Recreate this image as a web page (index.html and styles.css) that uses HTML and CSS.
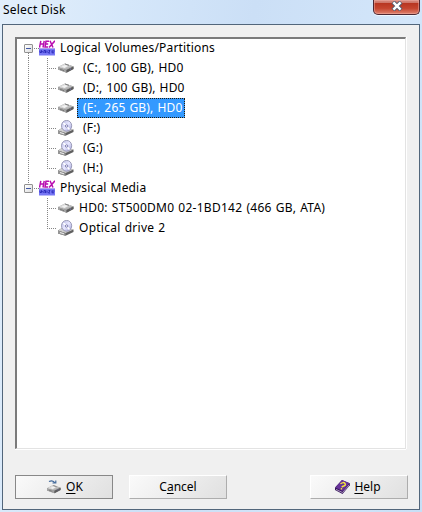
FILE: index.html
```html
<!DOCTYPE html>
<html lang="en">
<head>
<meta charset="utf-8">
<title>Select Disk</title>
<link rel="stylesheet" href="styles.css">
</head>
<body>
<svg class="defs" width="0" height="0" aria-hidden="true">
  <defs>
    <linearGradient id="metal" x1="0" y1="0" x2="1" y2="1"><stop offset="0" stop-color="#f4f4f4"/><stop offset=".55" stop-color="#c5c5c5"/><stop offset="1" stop-color="#868686"/></linearGradient>
    <linearGradient id="disc" x1="0" y1="0" x2="1" y2="1"><stop offset="0" stop-color="#b4b6e2"/><stop offset=".5" stop-color="#e8e8ff"/><stop offset="1" stop-color="#9a9ad4"/></linearGradient>
    <symbol id="drive" viewBox="0 0 18 16">
      <path d="M1 7 8 3.5 16.5 6.5V9L9.5 12.8 1 9.6Z" fill="#848484"/>
      <path d="M1 7 8 3.5 16.5 6.5 9.5 10Z" fill="url(#metal)"/>
      <path d="M1 7 9.5 10V12.8L1 9.6Z" fill="#a4a4a4"/>
      <path d="M9.5 10 16.5 6.5V9L9.5 12.8Z" fill="#5c5c5c"/>
      <path d="M4.5 6.8 8 5 11 6 7.5 8Z" fill="#f2f2f2"/>
      <path d="M3 9.2 7 10.7M8 4 12 5.4" stroke="#6c6c6c" stroke-width=".8"/>
      <path d="M13 9h1" stroke="#77b" stroke-width="1"/>
    </symbol>
    <symbol id="optical" viewBox="0 0 18 16">
      <path d="M1 10.5 5 8 16.5 9.5V12L8.5 15.7 1 13.5Z" fill="#606060"/>
      <path d="M1 10.5 5 8 16.5 9.5 8.5 13Z" fill="#d0d0d0"/>
      <path d="M1 10.5 8.5 13V15.7L1 13.5Z" fill="#959595"/>
      <path d="M3 12.5 7 13.8" stroke="#eee"/>
      <ellipse cx="9.6" cy="5.8" rx="5.1" ry="5.4" fill="url(#disc)" stroke="#8888a8" stroke-width=".8"/>
      <path d="M6.3 3.2 8.9 5.2M10 6.7 12.5 9.6" stroke="#fff" stroke-width="1.5"/>
      <circle cx="9.6" cy="6" r="1.2" fill="#fff" stroke="#6666a0" stroke-width=".8"/>
    </symbol>
    <symbol id="hex" viewBox="0 0 16 16">
      <path d="M0 9h16v6.5H0z" fill="#7777f5"/>
      <path d="M0 8.5h16" stroke="#b4a5ee"/>
      <path d="M1.8.8.5 7.5M5.2.8 4 7.5M1.5 4h3.2M10 1.3H7L6 7h3M6.5 4h2.7M11 .8 14 7.5M16 .8 10 7.5" fill="none" stroke="#b90eb0" stroke-width="1.5"/>
      <path d="M1 10.5v2h1.5v-2l1.5 2M5 13v-2.5h1.5V13M8 10.5v2.3M9.5 10.5H11L9.5 13H11M13 10.5v2.3h2M13 11h2.5" fill="none" stroke="#2525b4" stroke-width=".9"/>
    </symbol>
  </defs>
</svg>
<div class="window">
  <header class="titlebar">
    <span class="title">Select Disk</span>
    <button class="close" aria-label="Close"><svg width="12" height="10" viewBox="0 0 12 10"><path d="M2 1 10 9M10 1 2 9" stroke="#4d5a70" stroke-width="4.2"/><path d="M2.4 1.4 9.6 8.6M9.6 1.4 2.4 8.6" stroke="#fff" stroke-width="2.4"/></svg></button>
  </header>
  <main class="client">
    <ul class="tree">
      <li class="row"><span class="gutter first"><i class="toggle"></i></span><svg class="hex"><use href="#hex"/></svg><span class="label root volumes">Logical Volumes/Partitions</span></li>
      <li class="row"><span class="gutter trunk"></span><span class="gutter branch"></span><svg class="disk"><use href="#drive"/></svg><span class="label volume">(C:, 100 GB), HD0</span></li>
      <li class="row"><span class="gutter trunk"></span><span class="gutter branch"></span><svg class="disk"><use href="#drive"/></svg><span class="label volume">(D:, 100 GB), HD0</span></li>
      <li class="row"><span class="gutter trunk"></span><span class="gutter branch"></span><svg class="disk"><use href="#drive"/></svg><span class="label volume selected">(E:, 265 GB), HD0</span></li>
      <li class="row"><span class="gutter trunk"></span><span class="gutter branch"></span><svg class="disk"><use href="#optical"/></svg><span class="label volume">(F:)</span></li>
      <li class="row"><span class="gutter trunk"></span><span class="gutter branch"></span><svg class="disk"><use href="#optical"/></svg><span class="label volume">(G:)</span></li>
      <li class="row"><span class="gutter trunk"></span><span class="gutter branch last"></span><svg class="disk"><use href="#optical"/></svg><span class="label volume">(H:)</span></li>
      <li class="row"><span class="gutter end"><i class="toggle"></i></span><svg class="hex"><use href="#hex"/></svg><span class="label root">Physical Media</span></li>
      <li class="row"><span class="gutter"></span><span class="gutter branch"></span><svg class="disk"><use href="#drive"/></svg><span class="label media">HD0: ST500DM0 02-1BD142 (466 GB, ATA)</span></li>
      <li class="row"><span class="gutter"></span><span class="gutter branch last"></span><svg class="disk"><use href="#optical"/></svg><span class="label media">Optical drive 2</span></li>
    </ul>
    <footer class="actions">
      <button class="button default"><svg width="18" height="16" viewBox="0 0 18 16"><use href="#drive" y="3" width="18" height="14"/><path d="M4 2.5Q8 .5 10 4M7.5 4h3.3V1.5" fill="none" stroke="#426a9b" stroke-width="1.2"/></svg><span><u>O</u>K</span></button>
      <button class="button cancel"><span>C<u>a</u>ncel</span></button>
      <button class="button help"><svg width="17" height="16" viewBox="0 0 17 16"><path d="M1 8.5 8 1 15.8 4.2V6.2L8.5 15 1 11Z" fill="#37165d"/><path d="M1.5 8.5 8 1 15.5 4.3 8.5 12Z" fill="#67329a"/><path d="M2 10.4 8.5 13.5 15 6" fill="none" stroke="#c9b5d8" stroke-width=".8"/><path d="M6.5 4.8Q9.5 2.5 11 4.5T8.5 7.5L7.8 8.3M6.8 9.8h1.3" fill="none" stroke="#f5e83a" stroke-width="1.4"/></svg><span><u>H</u>elp</span></button>
    </footer>
  </main>
</div>
</body>
</html>
```
FILE: styles.css
```css
* { box-sizing: border-box; }
body { margin: 0; font: 12px/20px "Noto Sans", sans-serif; color: #000; overflow: hidden; }
.defs { display: block; height: 0; }
.window {
  width: 422px; height: 512px; padding: 0 2px 2px;
  display: flex; flex-direction: column;
  background: linear-gradient(100deg, #e3effb 0, #d5e7fa 25%, #cbdff6 50%, #d3e6fa 80%, #c7dff6 100%);
}
.titlebar { height: 24px; display: flex; justify-content: space-between; align-items: flex-start; }
.title { line-height: 19px; padding-left: 1px; letter-spacing: .2px; }
.close {
  width: 47px; height: 15px; padding: 0 0 3px; display: flex; justify-content: center; align-items: center;
  border: 1px solid #4c2732; border-top: 0; border-radius: 0 0 5px 5px;
  background: linear-gradient(#d78c82 0, #cf7568 20%, #b83622 25%, #c5452f 60%, #df8370 100%);
  box-shadow: inset 0 0 0 1px #efaea380, 0 1px 0 #eef7ff;
}
.client { flex: 1; background: #f0f0f0; border: 1px solid #52667b; padding: 12px 12px 10px; display: flex; flex-direction: column; }
.tree {
  list-style: none; margin: 0; height: 412px; width: 391px; padding: 0 0 0 2px; background: #fff;
  border: 2px solid; border-color: #7b7b7b #e3e3e3 #e3e3e3 #7b7b7b;
  border-right-width: 1px; border-bottom-width: 1px;
  box-shadow: 0 1px #fff, 1px 0 #fff;
}
.row { display: flex; height: 20px; align-items: center; }
.row:first-child { margin-top: -1px; }
.gutter { --dot: #858585; width: 19px; height: 20px; flex: none; background-repeat: no-repeat; }
.first, .end { width: 20px; padding: 6px 0 0 5px; }
.first, .end {
  background-image: repeating-linear-gradient(90deg, var(--dot) 0 1px, transparent 1px 2px), repeating-linear-gradient(var(--dot) 0 1px, transparent 1px 2px);
}
.first { background-size: 5px 1px, 1px 5px; background-position: 15px 10px, 9px 15px; }
.end { background-size: 5px 1px, 1px 6px; background-position: 15px 10px, 9px 0; }
.trunk { background-image: repeating-linear-gradient(var(--dot) 0 1px, transparent 1px 2px); background-size: 1px 20px; background-position: 9px 0; }
.branch {
  background-image: repeating-linear-gradient(90deg, var(--dot) 0 1px, transparent 1px 2px), repeating-linear-gradient(var(--dot) 0 1px, transparent 1px 2px);
  background-size: 10px 1px, 1px 20px; background-position: 9px 10px, 9px 0;
}
.branch.last { background-size: 10px 1px, 1px 11px; }
.toggle {
  display: block; width: 9px; height: 9px; border: 1px solid #919191; border-radius: 1px;
  background: linear-gradient(#4058a5, #4058a5) center / 5px 1px no-repeat, linear-gradient(135deg, #fff, #ddd);
}
.hex { width: 16px; height: 16px; flex: none; }
.disk { width: 18px; height: 16px; flex: none; }
.label { white-space: pre; padding: 0 1px; margin-left: 3px; height: 20px; letter-spacing: .17px; word-spacing: .7px; }
.label.root { margin-left: 4px; }
.label.volume { padding-left: 5px; }
.label.media { letter-spacing: .26px; }
.label.selected {
  width: 108px; margin-left: 2px; padding-left: 5px; line-height: 18px;
  background: #3399ff; color: #fff; border: 1px dotted #241a08;
}
.actions { margin-top: auto; display: flex; width: 393px; }
.button {
  width: 98px; height: 24px; padding: 0; display: flex; align-items: center; justify-content: center;
  font: inherit; color: #000; background: linear-gradient(135deg, #fafafa, #e0e0e0);
  border: 1px solid; border-color: #fff #adadad #adadad #fff;
}
.default { border-color: #888; gap: 3px; }
.cancel { margin-left: 16px; }
.help { margin-left: auto; gap: 3px; padding-right: 3px; }
.button u { text-underline-offset: 2px; text-decoration-thickness: 1px; }
```
